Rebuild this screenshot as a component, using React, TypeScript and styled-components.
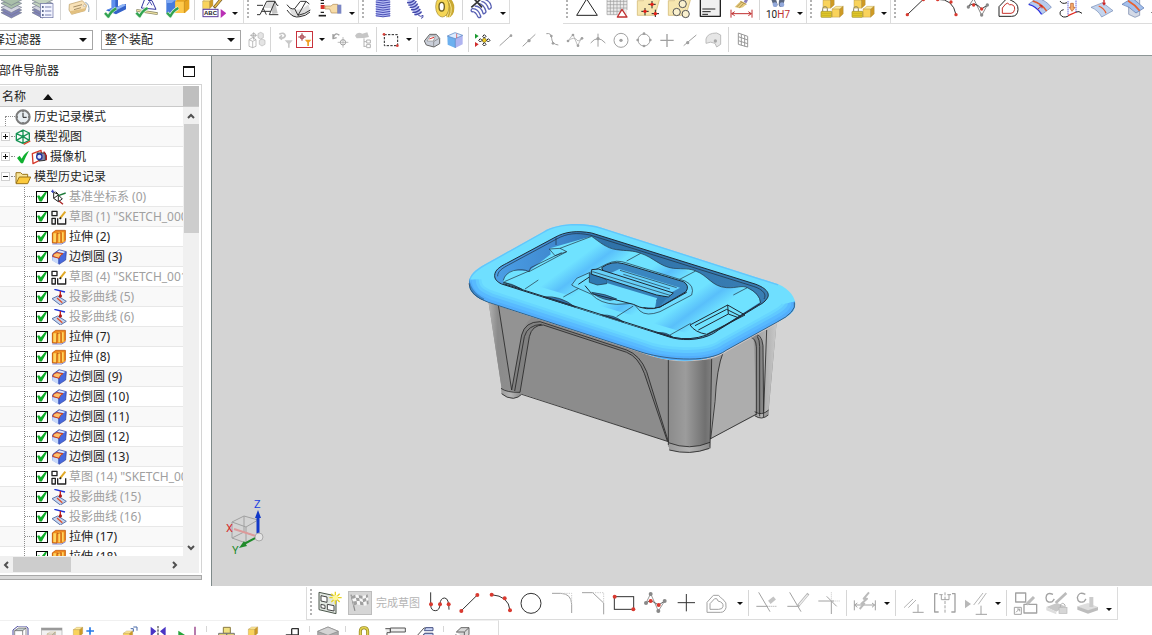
import React from 'react';
import styled, { createGlobalStyle } from 'styled-components';

const GlobalStyle = createGlobalStyle`
  * { box-sizing: border-box; }
  body {
    margin: 0;
    background: #fff;
    color: #1e1e1e;
    font: 12px/20px "Noto Sans", "Noto Sans CJK SC", sans-serif;
    overflow: hidden;
  }
  button, select, input { font: inherit; color: inherit; margin: 0; }
`;

/* ---------- layout ---------- */

const Window = styled.div`
  display: flex;
  flex-direction: column;
  height: 100vh;
  overflow: hidden;
`;

const TopBar = styled.header`
  display: flex;
  flex: none;
  height: 24px;
  overflow: hidden;
`;

const Group = styled.div<{ $gap?: number; $grow?: boolean }>`
  display: flex;
  flex: ${p => (p.$grow ? '1 0 auto' : 'none')};
  margin-left: ${p => p.$gap ?? 0}px;
  padding-right: ${p => (p.$gap === -4 ? 2 : 0)}px;
  border-right: 1px solid #dcdcdc;
  border-bottom: 1px solid #dcdcdc;
`;

const Grip = styled.span<{ $tall?: boolean }>`
  flex: none;
  width: ${p => (p.$tall ? 6 : 8)}px;
  margin: ${p => (p.$tall ? '2px 0' : '0 0 4px')};
  background: linear-gradient(#b2b2b2 2px, transparent 2px) 3px 0 / 2px 4px repeat-y;
`;

const Divider = styled.span<{ $tall?: boolean }>`
  flex: none;
  width: 1px;
  margin: ${p => (p.$tall ? '3px 2px' : '0 2px 3px')};
  background: #d6d6d6;
`;

const ToolButton = styled.button<{ $small?: boolean }>`
  display: flex;
  flex: none;
  justify-content: center;
  align-items: ${p => (p.$small ? 'center' : 'flex-start')};
  width: ${p => (p.$small ? 23 : 31)}px;
  padding: ${p => (p.$small ? 1 : 0)}px 0 0;
  border: 0;
  background: none;
  overflow: hidden;
`;

const FilterActive = styled(ToolButton)`
  width: 17px;
  height: 17px;
  align-self: center;
  align-items: center;
  border: 1px solid #c8323c;
`;

const DropButton = styled.button<{ $top?: number }>`
  display: flex;
  flex: none;
  justify-content: center;
  width: 13px;
  padding: ${p => p.$top ?? 12}px 0 0;
  border: 0;
  background: none;
`;

const Spacer = styled.span<{ $w: number }>`
  flex: none;
  width: ${p => p.$w}px;
`;

const SelectionBar = styled.div`
  display: flex;
  flex: none;
  height: 32px;
  border-bottom: 1px solid #8d9696;
  overflow: hidden;
`;

const Picker = styled.label<{ $w: number; $shift?: number }>`
  display: grid;
  flex: none;
  align-self: center;
  width: ${p => p.$w}px;
  height: 20px;
  margin: 1px 0 0 ${p => p.$shift ?? 8}px;
  border: 1px solid #a5a5a5;
  align-items: center;
  & > * { grid-area: 1 / 1; }
  & > svg { justify-self: end; margin-right: 5px; pointer-events: none; }
`;

const Select = styled.select`
  appearance: none;
  width: 100%;
  height: 18px;
  padding: 0 16px 0 3px;
  border: 0;
  background: #fff;
  line-height: 18px;
`;

const Main = styled.main`
  display: flex;
  flex: 1;
  min-height: 0;
`;

const Sidebar = styled.aside`
  display: flex;
  flex: none;
  flex-direction: column;
  width: 211px;
  padding: 0 9px 6px 0;
`;

const PanelTitle = styled.h2`
  display: flex;
  flex: none;
  justify-content: space-between;
  align-items: center;
  height: 28px;
  margin: 0 0 0 -1px;
  padding: 2px 7px 0 0;
  font-size: 12px;
  font-weight: 400;
`;

const MaxButton = styled.button`
  width: 12px;
  height: 11px;
  padding: 0;
  border: 1px solid #111;
  border-top-width: 2px;
  background: none;
`;

const TreePanel = styled.div`
  display: flex;
  flex: 1;
  flex-direction: column;
  min-height: 0;
  border: solid #d4d4d4;
  border-width: 1px 1px 0 0;
  padding: 1px 2px 0 0;
`;

const TreeHeader = styled.div`
  display: flex;
  flex: none;
  height: 21px;
  padding-left: 2px;
  align-items: stretch;
  background: #efefef;
  border-bottom: 1px solid #c9c9c9;
`;

const SortButton = styled.button`
  display: flex;
  flex: 1;
  align-items: center;
  gap: 17px;
  padding: 1px 0 0;
  border: 0;
  background: none;
`;

const HeaderCorner = styled.span`
  width: 16px;
  background: #bfbfbf;
`;

const TreeBody = styled.div`
  display: flex;
  flex: 1;
  min-height: 0;
`;

const Tree = styled.ul`
  flex: 1;
  min-width: 0;
  margin: 0;
  padding: 0;
  list-style: none;
  overflow: hidden;
`;

const Row = styled.li<{ $dim?: boolean }>`
  display: flex;
  align-items: center;
  height: 20px;
  border-bottom: 1px solid #e8e8e8;
  background: #fff;
  color: ${p => (p.$dim ? '#a0a0a0' : '#1e1e1e')};
  white-space: nowrap;
  &:nth-child(even) { background: #f9f9f9; }
  & > svg { flex: none; }
`;

const Gutter = styled.span<{ $w: number; $child?: boolean }>`
  display: flex;
  flex: none;
  align-items: center;
  align-self: stretch;
  width: ${p => p.$w}px;
  margin-left: ${p => (p.$child ? 24 : 0)}px;
  border-left: ${p => (p.$child ? '1px dotted #8c8c8c' : '0')};
  &::after {
    content: '';
    flex: 1;
    border-top: 1px dotted #8c8c8c;
  }
`;

const Stem = styled.span`
  flex: none;
  align-self: flex-end;
  width: 1px;
  height: 10px;
  margin-left: 5px;
  border-left: 1px dotted #8c8c8c;
`;

const Expander = styled.button`
  flex: none;
  width: 9px;
  height: 9px;
  margin: 0 1px;
  padding: 0;
  border: 1px solid #d0d0d0;
  background: #fff;
  & > svg { display: block; }
`;

const Check = styled.input`
  appearance: none;
  flex: none;
  width: 12px;
  height: 12px;
  margin: 0 3px 0 2px;
  border: 1px solid #000;
  background: #fff;
  &:checked::after {
    content: '';
    display: block;
    width: 10px;
    height: 10px;
    background: #0fae28;
    clip-path: polygon(0 45%, 22% 38%, 38% 58%, 85% 0, 100% 8%, 48% 100%, 26% 100%);
  }
`;

const RowLabel = styled.span`
  margin-left: 3px;
  line-height: 19px;
`;

const FeatureLabel = styled(RowLabel)`
  margin-left: 2px;
`;

const VScroll = styled.div`
  display: flex;
  flex: none;
  flex-direction: column;
  align-items: center;
  justify-content: space-between;
  width: 16px;
  background: #f0f0f0;
`;

const VThumb = styled.span`
  width: 15px;
  height: 109px;
  margin-bottom: auto;
  background: #cdcdcd;
`;

const HScroll = styled.div`
  display: flex;
  flex: none;
  align-items: center;
  height: 17px;
  padding-right: 17px;
  background: #f0f0f0;
`;

const HThumb = styled.span`
  width: 58px;
  height: 15px;
  margin-right: auto;
  background: #cdcdcd;
`;

const ScrollButton = styled.button<{ $wide?: boolean }>`
  display: flex;
  flex: none;
  justify-content: center;
  align-items: center;
  width: ${p => (p.$wide ? 16 : 13)}px;
  height: 17px;
  padding: 0;
  border: 0;
  background: none;
`;

const PanelFoot = styled.div`
  flex: none;
  height: 5px;
  margin-top: 2px;
  border: solid #a8a8a8;
  border-width: 1px 1px 1px 0;
  background: #d8d8d8;
`;

const Viewport = styled.section`
  position: relative;
  flex: 1;
  min-width: 0;
  border-left: 1px solid #7f8a8a;
  background: #d4d4d4;
  overflow: hidden;
`;

const Model = styled.svg`
  position: absolute;
  left: 248px;
  top: 159px;
`;

const Triad = styled.svg`
  position: absolute;
  left: 8px;
  bottom: 28px;
  font: 11px Roboto, "Liberation Sans", sans-serif;
`;

const SketchBar = styled.div`
  display: flex;
  flex: none;
  align-self: flex-start;
  height: 33px;
  margin: 1px 0 0 306px;
  padding-right: 2px;
  border: solid #dcdcdc;
  border-width: 0 1px 1px;
  & > button { align-items: center; }
`;

const FinishText = styled.button`
  width: 46px;
  padding: 0;
  border: 0;
  background: none;
  color: #b4b4b4;
  font-size: 11px;
  text-align: left;
  white-space: nowrap;
`;

const Flagged = styled(ToolButton)`
  width: 24px;
  height: 24px;
  margin: 4px 4px 0 4px;
  border: 1px solid #bdbdbd;
  background: #d6d6d6;
`;

const BottomBar = styled.footer`
  display: flex;
  flex: none;
  align-self: flex-start;
  height: 15px;
  padding: 5px 21px 0 5px;
  border-top: 1px solid #f0f0f0;
  border-right: 1px solid #dcdcdc;
  overflow: hidden;
`;

/* ---------- drawing helpers ---------- */

type PProps = { d: string; s?: string; w?: number; f?: string; dash?: string };
const P = ({ d, s = '#333', w = 3, f = 'none', dash }: PProps) => (
  <path d={d} stroke={s} strokeWidth={w} fill={f} strokeDasharray={dash} strokeLinejoin="round" />
);
const Fill = ({ d, f }: { d: string; f: string }) => <path d={d} fill={f} />;
const Dots = ({ at, f = '#d93a30', r = 5 }: { at: number[][]; f?: string; r?: number }) => (
  <>{at.map(([x, y]) => <circle key={`${x}-${y}`} cx={x} cy={y} r={r} fill={f} />)}</>
);
const Tick = ({ x, y }: { x: number; y: number }) => (
  <g transform={`translate(${x} ${y})`}>
    <P d="M2 16 L12 27 Q20 10 36 2" s="#e6f5e6" w={11} />
    <P d="M2 16 L12 27 Q20 10 36 2" s="#31a350" w={7} />
  </g>
);
const Cube = ({ x, y, k = 1, c = ['#ffeb9c', '#f9d35c', '#cf9a24'] }: { x: number; y: number; k?: number; c?: string[] }) => (
  <g transform={`translate(${x} ${y}) scale(${k})`} stroke="#a98a3c" strokeWidth="1">
    <path d="M0 7 L10 0 L28 0 L19 7Z" fill={c[0]} />
    <path d="M0 7 L19 7 L19 27 L0 27Z" fill={c[1]} />
    <path d="M19 7 L28 0 L28 19 L19 27Z" fill={c[2]} />
  </g>
);
const Lock = ({ x, y, c = '#e3cb2c' }: { x: number; y: number; c?: string }) => (
  <g transform={`translate(${x} ${y})`}>
    <P d="M6 17 V8 Q6 2 13 2 Q20 2 20 8 V17" s="#8b8560" />
    <rect x="1" y="16" width="32" height="18" rx="2" fill={c} stroke="#9a8a28" strokeWidth="2" />
    <P d="M3 22 H31 M3 28 H31" s="#c0a61c" w={2} />
  </g>
);
const Arrow = () => (
  <svg width="6" height="3" viewBox="0 0 6 3" aria-hidden="true"><path d="M0 0 H6 L3 3Z" fill="#111" /></svg>
);
const BigArrow = () => (
  <svg width="8" height="4" viewBox="0 0 8 4" aria-hidden="true"><path d="M0 0 H8 L4 4Z" fill="#111" /></svg>
);

/* ---------- icons ---------- */

const Layers = ({ top }: { top: string }) => (
  <>
    {[38, 30, 22, 10, 0].map((y, i) => (
      <path key={y} d={`M6 ${y} L37 ${y - 12} L68 ${y} L37 ${y + 16}Z`} fill={i < 2 ? '#8183b8' : i === 2 ? '#d3d5e0' : top} stroke="#73788c" strokeWidth="2" />
    ))}
  </>
);

const topIcons: Record<string, React.ReactNode> = {
  layers: <Layers top="#a9bfa9" />,
  layerList: (
    <>
      <Layers top="#c3d3bf" />
      <rect x="31" y="11" width="38" height="42" fill="#f3f5ff" stroke="#646b9e" strokeWidth="2" />
      <P d="M45 21 H64 M45 33 H64 M45 45 H64" s="#7880b0" />
      <P d="M36 21 H41 M36 33 H41 M36 45 H41" s="#31416f" w={5} />
    </>
  ),
  tag: (
    <>
      <P d="M58 7 Q72 12 68 36" s="#8da6bb" />
      <P d="M10 13 L49 2 L62 16 L57 32 L17 43 L9 30Z" f="#f8e2b8" s="#b8985c" w={2} />
      <Fill d="M11 34 L57 25 L57 32 L17 43Z" f="#e2c080" />
      <P d="M22 21 L48 14 M24 29 L45 23" s="#7c623a" w={2} />
      <circle cx="55" cy="17" r="3" fill="#fff" stroke="#777" />
    </>
  ),
  blueBlock: (
    <>
      <Fill d="M29 -6 L48 -6 L48 19 L72 12 L72 28 L42 43 L12 31 L29 24Z" f="#3563c9" />
      <Fill d="M29 -6 L40 -6 L40 28 L12 31 L29 24Z" f="#5d90ee" />
      <Fill d="M40 24 L62 12 L72 16 L46 29Z" f="#8eb5f7" />
      <Tick x={7} y={23} />
    </>
  ),
  sketchCheck: (
    <>
      <P d="M34 0 L25 24 L69 28 L57 2 L45 1" s="#3437a0" />
      <P d="M10 31 L74 41" s="#8c8a68" w={8} />
      <P d="M12 31 L72 41" s="#eee1a0" w={4} />
      <P d="M42 16 L50 4 L57 16" s="#5257b5" />
      <Tick x={8} y={22} />
    </>
  ),
  solidCheck: (
    <>
      <Fill d="M7 -1 H35 V31 L20 40 H7Z" f="#477bdd" />
      <Fill d="M7 -1 H35 L23 9 H7Z" f="#80a9f2" />
      <Fill d="M34 3 L48 -7 H76 V26 L63 39 H34Z" f="#e8a520" />
      <Fill d="M34 5 H61 V39 H34Z" f="#ffc94a" />
      <P d="M61 5 L75 -4 M61 5 V39" s="#b9851c" w={2} />
      <Tick x={7} y={22} />
    </>
  ),
  abc: (
    <>
      <Cube x={8} y={-4} k={1.1} />
      <P d="M42 23 L64 -3" s="#725a2a" w={9} />
      <P d="M44 21 L64 -3" s="#e5b849" w={5} />
      <rect x="9" y="28" width="45" height="22" fill="#fff" stroke="#5b3b9c" strokeWidth="3" />
      <text x="12" y="46" fontSize="18" fontWeight="700" fontFamily="Liberation Sans, sans-serif" fill="#222">ABC</text>
      <Fill d="M62 27 L79 40 L62 54Z" f="#b930b5" />
    </>
  ),
  bridge: (
    <>
      <Fill d="M27 24 L40 1 L62 1 L49 24Z" f="#dedede" />
      <Fill d="M49 24 L60 4 L68 40 L52 42Z" f="#c4c4c4" />
      <P d="M6 16 H24 M6 44 H15 L35 4 H60 L43 44 H70 M60 4 L66 16 H70 M24 24 L34 44 M20 34 H47" />
    </>
  ),
  saddle: (
    <>
      <Fill d="M8 20 Q35 42 67 13 L73 32 Q45 56 20 50Z" f="#dedede" />
      <P d="M3 14 Q14 30 26 26 L43 4 H60 L70 12 M26 26 L36 46 L60 4 M36 46 Q58 42 73 30 M3 30 Q20 56 42 50 Q60 48 72 36" />
    </>
  ),
  pick: (
    <>
      <P d="M11 1 H21 M11 10 H21 M11 37 H21" s="#222" w={4} />
      <P d="M5 47 H27" s="#222" w={5} />
      <rect x="11" y="15" width="12" height="12" fill="#d8352c" />
      <P d="M24 18 H42 L48 13 H62 V39 H43 L38 27 H24Z" f="#f7dca8" s="#b08a52" w={2} />
      <rect x="61" y="14" width="12" height="27" fill="#7b86c4" />
    </>
  ),
  coil: (
    <>
      <rect x="18" y="-4" width="42" height="54" fill="#b6bdf5" />
      <P d="M17 -1 Q39 6 61 -1 M17 6 Q39 13 61 6 M17 13 Q39 20 61 13 M17 20 Q39 27 61 20 M17 27 Q39 34 61 27 M17 34 Q39 41 61 34 M17 41 Q39 48 61 41 M17 47 Q39 54 61 47" s="#4a4fb4" />
    </>
  ),
  spring: (
    <>
      <Fill d="M18 2 L38 -6 L62 40 L44 48Z" f="#bcc3f5" />
      <P d="M18 8 Q34 10 42 -3 M22 15 Q38 17 46 3 M26 22 Q42 24 50 11 M30 29 Q46 31 54 19 M34 37 Q50 38 58 27 M40 44 Q54 45 62 35" s="#4348a8" w={4} />
      <P d="M52 46 Q60 52 66 46 Q68 54 60 55" s="#4348a8" />
    </>
  ),
  roll: (
    <>
      <ellipse cx="50" cy="24" rx="17" ry="28" fill="#c9a832" />
      <P d="M38 -3 Q58 23 44 53 M47 -2 Q66 23 52 52" s="#f5e48c" />
      <ellipse cx="31" cy="20" rx="20" ry="31" fill="#f5d655" stroke="#a08a33" strokeWidth="2" />
      <ellipse cx="29" cy="20" rx="8" ry="13" fill="#fff" stroke="#706222" strokeWidth="4" />
    </>
  ),
  springX: (
    <>
      <P d="M12 26 Q30 24 38 48 M10 34 Q24 34 30 52 M20 18 Q40 18 46 42 M30 10 Q48 12 54 34 M40 4 Q56 6 62 28 M50 -2 Q66 2 70 20 M12 26 Q6 34 14 36 M30 52 Q40 54 38 48 M46 42 Q54 40 54 34 M62 28 Q70 26 70 20" s="#5a62b4" w={4} />
      <P d="M14 -8 L42 22 M42 -6 L10 22" s="#333" w={5} />
    </>
  ),
  triangle: <P d="M8 46 L38 -3 L70 46Z" s="#222" />,
  gridTri: (
    <>
      <rect x="6" y="-6" width="60" height="50" fill="#ececec" />
      <P d="M6 -6 V44 M16 -6 V44 M26 -6 V44 M36 -6 V44 M46 -6 V44 M56 -6 V30 M66 -6 V30 M6 4 H66 M6 14 H66 M6 24 H66 M6 34 H44 M6 44 H38" s="#9a9a9a" w={2} />
      <P d="M37 51 L51 28 L66 51Z" f="#fff" s="#c03030" w={4} />
    </>
  ),
  pts: (
    <>
      <P d="M4 46 V2 H22 L27 -3 L71 -3 L57 46Z" f="#f6e6b0" s="#cfb266" w={2} />
      <P d="M48 3 V25 M37 13 H59 M27 24 V46 M16 34 H38 M58 29 V51 M47 41 H69" s="#222" />
      <Dots at={[[48, 13], [27, 34], [58, 41]]} f="#e82018" />
    </>
  ),
  holes: (
    <>
      <P d="M4 46 V2 H22 L27 -3 L71 -3 L57 46Z" f="#f6e6b0" s="#cfb266" w={2} />
      {[[47, 12], [29, 36], [56, 42]].map(([x, y]) => <circle key={x} cx={x} cy={y} r="11" fill="#faf1cf" stroke="#555" strokeWidth="3" />)}
    </>
  ),
  note: (
    <>
      <P d="M7 -6 V49 H67 V-6" f="#f0f0f0" s="#222" w={4} />
      <P d="M13 27 H52 M13 35 H38 M13 43 H30" s="#222" />
    </>
  ),
  brush: (
    <>
      <P d="M48 8 L56 -8" s="#8b7fbb" w={9} />
      <Fill d="M17 21 L36 2 L53 12 L42 22 L31 25Z" f="#e5ca7c" />
      <P d="M34 4 L52 13 M23 21 L38 6 M31 24 L44 10" s="#9a7b3e" w={2} />
      <P d="M6 29 V53 M69 29 V53 M8 41 H67 M17 35 L8 41 L17 47 M58 35 L67 41 L58 47" s="#c03030" />
    </>
  ),
  h7: (
    <>
      <path d="M18 -4 L34 1 L38 15 Q34 24 26 18Z M42 1 L60 -4 L54 18 Q44 26 41 14Z" fill="#59667f" />
      <Dots at={[[30, 14], [51, 14]]} f="#93a9dc" r={7} />
      <text x="3" y="54" fontSize="30" fontFamily="Roboto, sans-serif" fill="#222">10<tspan fill="#c03030">H7</tspan></text>
    </>
  ),
  lockCubes: (
    <>
      <Cube x={15} y={-8} k={1.2} /><Cube x={42} y={19} k={1.2} /><Lock x={8} y={18} />
    </>
  ),
  line: <><P d="M16 44 L64 -2" /><Dots at={[[16, 44], [64, -1]]} /></>,
  arc: <><P d="M13 -2 Q60 -4 69 44" /><Dots at={[[14, -1], [54, 6], [69, 44]]} /></>,
  spline: (
    <>
      <P d="M12 21 L29 -4 L53 46 L70 15" s="#888" /><P d="M12 21 Q30 0 53 27 L70 15" />
      <Dots at={[[13, 21], [53, 45], [70, 15]]} f="#888" /><Dots at={[[29, 15], [53, 27]]} />
    </>
  ),
  offset: (
    <>
      <P d="M12 49 V20 L34 -3 Q44 -3 50 2 Q70 10 69 29 Q68 49 50 49Z" s="#222" />
      <P d="M22 40 V24 L32 12 Q39 6 43 14 Q60 12 59 28 Q57 40 48 40Z" s="#c8322c" />
    </>
  ),
  surfCurve: (
    <>
      <Fill d="M8 12 L34 -6 Q62 2 76 22 L48 43 Q32 18 8 12Z" f="#b7cbee" />
      <P d="M8 12 L34 -6 Q62 2 76 22 L48 43" s="#667fb3" w={2} />
      <P d="M8 13 Q32 19 47 43" s="#2a2ee0" w={4} />
      <P d="M20 3 Q46 10 62 33" s="#e0582a" w={4} />
      <P d="M35 28 L48 17 M40 17 H48 V25" s="#c22" />
    </>
  ),
  project: (
    <>
      <P d="M9 3 Q15 14 30 8 M20 29 Q6 32 10 44 Q18 56 34 48" s="#222" />
      <P d="M33 47 L58 36" s="#e02820" w={4} /><P d="M57 36 Q66 32 75 40" s="#222" />
      <P d="M33 4 V46 M57 -2 V36" s="#2222cc" dash="3 3" />
      <P d="M41 10 H49 V22 H54 L45 34 L37 22 H41Z" f="#f6b070" s="#b4501c" w={2} />
    </>
  ),
  surfPin: (
    <>
      <P d="M9 22 L44 8 L75 32 L41 51 Q30 30 9 22Z" f="#c3d4ee" s="#7289b4" w={2} />
      <P d="M32 18 Q48 24 54 40" s="#e86030" w={4} /><P d="M48 -4 V10" s="#c22" w={4} /><Fill d="M42 8 H54 L48 17Z" f="#c22" />
    </>
  ),
  surfCross: (
    <>
      <P d="M29 12 L52 -6 L62 0 V46 L48 52 L29 43Z" f="#d3d9e6" s="#6d7fa4" w={2} />
      <P d="M9 13 L40 -6 L75 24 L51 39 Q30 18 9 13Z" f="#a4c0ec" s="#5573aa" w={2} />
      <P d="M27 2 Q48 14 62 32" s="#e86030" w={5} />
    </>
  ),
};

const TopIcon = ({ n, label }: { n: string; label: string }) => (
  <ToolButton type="button" aria-label={label}>
    <svg width="26" height="20" viewBox="0 0 78 60" aria-hidden="true">{topIcons[n]}</svg>
  </ToolButton>
);

const g = '#a0a0a0';
const smallIcons: Record<string, React.ReactNode> = {
  assembly: <><P d="M3 26 L14 20 L24 26 V46 L14 50 L3 46Z M3 26 L14 31 L24 26 M14 31 V50" s={g} w={2} /><P d="M17 4 V26 M6 13 H28" s={g} w={2} /><circle cx="17" cy="13" r="6" fill="none" stroke={g} strokeWidth="2" /><path d="M30 8 L38 4 L46 8 V20 L38 24 L30 20Z M34 28 L42 24 L51 28 V40 L42 45 L34 40Z" fill="#e4e4e4" stroke="#b8b8b8" strokeWidth="2" /></>,
  undoFilter: <><P d="M10 10 Q24 2 28 14 Q24 24 11 20 L18 13 M11 20 L18 26" s="#c4c4c4" w={5} /><Fill d="M26 28 H50 L41 38 V50 H36 V38Z" f="#c9c9c9" /></>,
  rotateCross: <><P d="M6 9 V23 L17 20 M7 20 Q12 2 25 13" s={g} w={4} /><P d="M36 18 V50 M20 34 H52" s={g} w={2} /><circle cx="36" cy="34" r="8" fill="none" stroke={g} strokeWidth="3" /></>,
  treeGray: <><Fill d="M3 14 Q10 0 25 8 L40 4 L45 18 L30 21 L8 22Z" f="#c6c6c6" /><P d="M30 22 V48 M30 32 H36 M30 46 H36 M38 27 H49 V36 H38Z M38 40 H49 V50 H38Z" s="#b4b4b4" /></>,
  marquee: <><P d="M7 11 H47 V44 H7Z" s="#222" dash="7 4" /><Dots at={[[6, 10], [46, 44]]} f="#d84038" r={4} /></>,
  gauge: <><P d="M4 30 L20 10 H40 L50 22 V38 L33 48 L10 42Z" f="#c9ced8" s="#666" /><P d="M12 30 L22 15 H37 L31 30Z" f="#fff" s="#888" w={2} /><P d="M32 48 V32 L48 22" s="#777" w={2} /><P d="M19 24 L33 19" s="#d33" /></>,
  cube3: <><Fill d="M4 15 L27 5 L50 13 L28 23Z" f="#dcecff" /><Fill d="M4 15 L28 23 V51 L5 41Z" f="#6cb0ef" /><Fill d="M28 23 L50 13 V40 L28 51Z" f="#b0b4f0" /><P d="M4 15 L27 5 L50 13 L28 23Z M28 23 V51" s="#4a78bd" w={2} /><P d="M32 21 V8" s="#d33" w={2} /></>,
  snapAll: <><Fill d="M3 8 L14 15 L3 23Z" f="#1a9a30" /><Fill d="M3 33 L14 40 L3 48Z" f="#d02c2c" /><circle cx="31" cy="28" r="6" fill="#f5d020" stroke="#776410" strokeWidth="2" /><P d="M26 16 L31 11 L36 16 L31 21Z M26 40 L31 35 L36 40 L31 45Z M14 28 L19 23 L24 28 L19 33Z M38 28 L43 23 L48 28 L43 33Z" s="#222" /></>,
  l1: <><P d="M8 44 L42 13" s={g} /><Dots at={[[42, 14]]} f={g} r={4} /></>,
  l2: <><P d="M8 46 L46 10" s={g} /><Dots at={[[27, 29]]} f={g} /></>,
  sCurve: <><P d="M10 8 Q26 5 26 22 Q27 40 46 42" s={g} /><Dots at={[[25, 15], [30, 37]]} f={g} r={4} /></>,
  poly: <><P d="M6 30 L21 10 L35 44 L47 20 M6 30 Q24 14 36 30 L48 24" s={g} w={2} /><Dots at={[[6, 30], [21, 12], [36, 44], [48, 22]]} f={g} r={4} /></>,
  cross2: <><P d="M5 36 Q26 10 49 36 M27 8 V47" s={g} /><Dots at={[[27, 23]]} f={g} /></>,
  circDot: <><circle cx="27" cy="28" r="21" fill="none" stroke={g} strokeWidth="3" /><Dots at={[[27, 28]]} f={g} /></>,
  circ4: <><circle cx="27" cy="27" r="18" fill="none" stroke={g} strokeWidth="3" /><Dots at={[[27, 8], [27, 45], [8, 27], [46, 27]]} f={g} r={4} /></>,
  plus: <P d="M27 9 V48 M7 28 H47" s={g} w={4} />,
  l3: <><P d="M8 44 L46 12" s={g} /><Dots at={[[20, 35]]} f={g} /></>,
  face: <><P d="M6 24 Q10 6 38 6 L50 12 V40 L38 48 L33 37 Q20 30 6 37Z" f="#e6e6e6" s="#bcbcbc" /><circle cx="34" cy="30" r="5" fill="#a8a8a8" /></>,
  grid: <P d="M13 6 L41 16 V48 L13 40Z M22 9 V43 M32 12 V46 M13 17 L41 27 M13 29 L41 38" s="#999" />,
  activeFilter: <><P d="M18 4 V32 M4 18 H32" s="#a03038" /><circle cx="18" cy="18" r="7" fill="none" stroke="#a03038" strokeWidth="3" /><Fill d="M28 28 H52 L43 38 V50 H37 V38Z" f="#f0a020" /></>,
};

const SmallIcon = ({ n, label }: { n: string; label: string }) => (
  <ToolButton type="button" aria-label={label} $small>
    <svg width="18" height="18" viewBox="0 0 54 54" aria-hidden="true">{smallIcons[n]}</svg>
  </ToolButton>
);

const k = '#a2a2a2';
const sketchIcons: Record<string, React.ReactNode> = {
  newSketch: <><P d="M9 4 L60 15 V68 L9 56Z" f="#e2e8e2" s="#4a554a" /><P d="M15 14 L33 18 V34 L15 30Z M15 40 L27 43 V53 L15 50Z M34 40 L54 44 V60 L34 56Z" f="#fff" s="#444" /><P d="M58 2 V40 M40 20 H77 M46 8 L71 33 M71 8 L46 33" s="#e8d424" w={4} /><Dots at={[[58, 20]]} f="#fff79a" r={8} /></>,
  profile: <><P d="M17 4 V42 Q18 60 32 59 Q44 58 45 40 Q46 21 59 21 Q72 22 72 56" /><Dots at={[[18, 40], [45, 40], [71, 40]]} r={6} /></>,
  line: <><P d="M16 59 L64 12" /><Dots at={[[16, 60], [64, 12]]} r={6} /></>,
  arc: <><P d="M13 11 Q65 15 69 58" /><Dots at={[[14, 11], [53, 22], [69, 58]]} r={6} /></>,
  circle: <circle cx="39" cy="37" r="30" fill="none" stroke="#333" strokeWidth="3" />,
  fillet: <><P d="M9 7 H35 Q67 8 68 40 V66" s={k} /><P d="M38 7 H68 V36" s="#ccc" dash="4 3" /></>,
  chamfer: <><P d="M6 5 H38 L71 36 V70" s={k} /><P d="M38 5 H71 V36" s="#ccc" dash="4 3" /></>,
  rect: <><rect x="10" y="17" width="58" height="38" fill="none" stroke="#333" strokeWidth="3" /><Dots at={[[11, 17], [67, 55]]} r={6} /></>,
  spline: <><P d="M12 36 L26 8 L49 60 L68 30" s="#999" /><P d="M12 36 L26 28 L50 42 L68 30" s="#666" /><Dots at={[[12, 36], [26, 9], [49, 60], [68, 30]]} f="#888" r={6} /><Dots at={[[26, 30], [50, 42]]} r={6} /></>,
  plus: <P d="M40 9 V61 M14 35 H66" s="#333" />,
  offset: <><P d="M9 64 V34 L28 13 H44 Q48 20 56 24 Q70 34 66 50 Q62 64 50 64Z M18 55 V38 L32 23 Q40 20 42 30 Q59 34 57 46 Q56 55 44 55Z" s={k} /></>,
  trim: <><P d="M7 46 H43 M14 4 L48 62" s={k} /><P d="M46 46 H70" s={k} dash="3 3" /><P d="M46 34 L62 21" s="#c4c4c4" w={12} /></>,
  extend: <><P d="M7 46 H43 M14 4 L48 62" s={k} /><P d="M38 46 L70 8" s="#b4b4b4" w={8} /><P d="M42 42 L68 11" s="#eee" w={4} /></>,
  corner: <><P d="M7 30 H54 M46 30 V69 M32 16 L62 46" s={k} /><P d="M46 4 V30 H71" s="#c4c4c4" dash="3 3" /></>,
  dimension: <><P d="M7 28 V58 M70 28 V58 M8 42 H68 M16 36 L8 42 L16 49 M60 36 L68 42 L60 49" s={k} /><P d="M51 4 L35 23 H45 L28 38 H37 L23 54" s="#bbb" w={6} /></>,
  parallel: <><P d="M9 50 L36 24 M22 50 L45 27" s="#b5b5b5" /><P d="M51 40 V64 M35 64 H68" s={k} /></>,
  mirror: <><P d="M17 8 H8 V63 H20 M60 8 H69 V63 H58" s={k} w={4} /><P d="M39 4 V69" s={k} dash="9 4" /><P d="M28 12 V26 H51 V12 M22 11 H32 M46 11 H57" s={k} /></>,
  autoCon: <><Fill d="M6 26 L24 39 L6 52Z" f="#b8b8b8" /><P d="M32 42 L60 6 M46 40 L70 6" s="#b5b5b5" /><P d="M54 44 V70 M38 70 H72" s={k} /></>,
  attach: <><P d="M11 6 H41 V33 H11Z M36 40 H74 V66 H36Z" s={k} w={4} /><P d="M7 49 H28 V70 H7Z M12 64 L22 54 M15 54 H23 V61" s={k} /><P d="M44 40 L66 18" s="#bcbcbc" w={9} /></>,
  edit: <><P d="M30 10 Q10 2 9 20 Q10 38 28 32 L34 24" s={k} w={4} /><P d="M38 36 L70 6" s="#bbb" w={8} /><Fill d="M10 48 L42 36 L66 46 L40 62Z" f="#c8c8c8" /><Fill d="M10 48 L40 62 V70 L10 58Z" f="#dedede" /><P d="M52 50 V42 Q59 32 66 42 V50" s="#b0b0b0" /><rect x="48" y="49" width="24" height="18" fill="#d6d6d6" stroke="#b8b8b8" strokeWidth="2" /></>,
  sphere: <><P d="M34 10 Q14 0 10 20 Q12 38 30 32 L36 24" s={k} w={4} /><Fill d="M10 46 L42 36 L72 48 L42 60Z" f="#dedede" /><Fill d="M46 18 H58 V48 H46Z" f="#cbcbcb" /><Fill d="M10 46 L42 58 V68 L10 56Z M72 48 L42 58 V68 L72 58Z" f="#bdbdbd" /></>,
  flag: <><P d="M7 6 L21 64" s="#8a8a8a" w={4} /><Fill d="M9 12 Q28 2 38 10 Q52 14 66 4 L70 40 Q52 50 40 43 Q28 38 17 46Z" f="#f8f8f8" /><Fill d="M9 12 L22 7 L24 17 L12 22Z M34 8 L48 11 L48 22 L36 18Z M24 17 L36 18 L38 29 L27 29Z M48 22 L60 18 L62 29 L50 33Z M14 31 L27 29 L29 40 L17 46Z M38 29 L50 33 L52 45 L40 43Z M60 8 L66 4 L68 16 L60 18Z M62 29 L69 26 L70 40 L63 42Z" f="#a0a0a0" /></>,
};

const SketchIcon = ({ n, label }: { n: string; label: string }) => (
  <ToolButton type="button" aria-label={label}>
    <svg width="26" height="24" viewBox="0 0 78 72" aria-hidden="true">{sketchIcons[n]}</svg>
  </ToolButton>
);

const footIcons: Record<string, React.ReactNode> = {
  cage: <><P d="M15 12 L30 0 H52 L60 6 V33 H15Z" s="#4b4b9c" /><P d="M20 14 L32 6 H54 L44 14Z M20 14 V33 M44 14 V33 M54 6 V33" s="#555" f="#c4d0d0" w={2} /></>,
  win: <><rect x="7" y="6" width="62" height="36" fill="#f2f2f2" stroke="#aaa" strokeWidth="2" /><rect x="7" y="6" width="62" height="7" fill="#999" /><Cube x={24} y={18} k={0.9} c={['#eee', '#ddd', '#bbb']} /></>,
  addBody: <><Cube x={10} y={4} k={1} /><P d="M60 4 V26 M49 15 H72" s="#2478e8" w={5} /></>,
  moveBody: <><Cube x={28} y={15} k={1} /><P d="M50 8 H58 V17 M58 3 H69 V14" s="#4668a8" /></>,
  mirrorBody: <><Fill d="M17 2 L34 16 L17 31Z M62 2 L45 16 L62 31Z" f="#4a35c4" /><P d="M39 0 V33" s="#222" dash="7 3" /></>,
  axis: <><Fill d="M7 14 L27 27 V33 H7Z" f="#26a43a" /><P d="M57 2 V30 M40 30 H73" s="#923a84" w={4} /></>,
  boxes: <><P d="M34 4 H55 V22 H34Z" f="#f0e080" s="#8a7a40" /><P d="M20 22 H44 V36 H20Z M44 22 H67 V36 H44Z" f="#e0d078" s="#777" /></>,
  block: <Cube x={16} y={3} k={1} />,
  steps: <P d="M38 8 H58 V27 H38 V8 M38 27 H22 V36 M50 27 V36" s="#333" w={4} />,
  slab: <><P d="M8 16 L39 3 L70 16 V36 L39 30 L8 36Z" f="#aaa" s="#888" w={2} /><P d="M8 16 L39 3 L70 16 L39 28Z" f="#d4d4d4" s="#888" w={2} /></>,
  ring: <><P d="M28 36 V16 Q28 5 39 5 Q50 5 50 16 V36" s="#8f8018" w={9} /><P d="M28 36 V16 Q28 5 39 5 Q50 5 50 16 V36" s="#e0d050" w={5} /></>,
  plate: <P d="M10 8 H25 V20 H15 V36 M25 6 H70 V18 H25Z" s="#555" f="#eee" />,
  link: <><P d="M8 34 L33 6 H60 M22 34 L36 22 H58" s="#555" /><P d="M38 5 H60 V14 H34Z M34 22 H60 V34 H30Z" s="#4c578a" f="#c8d4f4" /></>,
  prism: <P d="M22 18 L36 5 H60 V26 L48 36 M22 18 H46 V36 M46 18 L60 5 M6 34 L22 26" s="#666" f="#d8d8d8" />,
};
const FootIcon = ({ n, label }: { n: string; label: string }) => (
  <ToolButton type="button" aria-label={label}>
    <svg width="26" height="11" viewBox="0 0 78 33" aria-hidden="true">{footIcons[n]}</svg>
  </ToolButton>
);

const Drop = ({ top }: { top?: number }) => (
  <DropButton type="button" aria-label="更多" $top={top}><Arrow /></DropButton>
);

/* ---------- tree ---------- */

const treeIcons: Record<string, React.ReactNode> = {
  clock: <><circle cx="24" cy="24" r="20" fill="#e8eef2" stroke="#7b7b7b" strokeWidth="6" /><P d="M24 11 V25 H35" s="#222" /><P d="M24 6 V9 M24 39 V42 M6 24 H9 M39 24 H42" s="#444" /></>,
  view: <><P d="M4 14 L24 3 L43 12 V34 L24 43 L4 34Z M4 14 L24 23 L43 12 M24 3 V43 M4 34 L24 23 L43 34" s="#179455" w={4} /><P d="M26 46 L46 36" s="#e2462a" w={4} /></>,
  camera: <><P d="M4 14 L30 4 L34 30 L6 44Z" f="#fff" s="#d6382a" w={4} /><P d="M18 12 H43 V34 L24 36Z" f="#8386a8" s="#333" /><circle cx="25" cy="23" r="8" fill="#dfe6ff" stroke="#2433a0" strokeWidth="4" /><P d="M38 8 L46 20 V34" s="#b02020" w={4} /></>,
  folder: <><P d="M3 42 V11 H17 L22 16 H38 V24" f="#f7e49a" s="#9b7418" /><P d="M3 44 L13 24 H47 L38 44Z" f="#fbc93c" s="#9b7418" /></>,
  csys: <><P d="M5 2 V12 M0 7 H10" s="#3440c0" /><P d="M8 10 V28 L22 38 V16Z M8 28 L22 18 L34 30 M22 38 L34 30 M14 8 L22 16" s="#222" /><P d="M22 20 L44 12" s="#1c7a38" w={4} /><P d="M24 36 L36 46" s="#a22" w={4} /></>,
  sketch: <><P d="M3 7 H18 V20 H3Z M3 28 H13 V45 H3Z M20 28 V45 H44 V28" s="#222" w={4} /><P d="M27 28 L43 8" s="#e0a827" w={6} /><P d="M26 30 L30 26" s="#222" w={5} /></>,
  extrude: <><Fill d="M3 11 L14 4 H44 V36 L34 43 H3Z" f="#f08a1e" /><Fill d="M7 13 H16 V40 H7Z M22 10 H28 V40 H22Z M33 10 H38 V38 H33Z" f="#ffd660" /><P d="M4 12 V41 L17 43 L18 14 L30 11 M30 12 V41 M4 12 L14 4 H43 V34" s="#b8500e" w={2} /><P d="M4 45 H32 L44 38" s="#4553bb" w={2} /></>,
  blend: <><Fill d="M3 18 L24 2 L46 8 L44 33 L24 46 L4 34Z" f="#4769dd" /><Fill d="M4 24 L22 28 V46 L4 35Z" f="#c8d9fa" /><P d="M5 22 Q8 11 18 11 L36 14 Q27 17 24 28Z" f="#ffc06a" s="#d0401c" /><Fill d="M18 8 L26 3 L44 8 L37 12Z" f="#e3ecff" /><P d="M24 28 V46 L44 33 L46 8 L24 2 L5 16" s="#2b3e9c" w={2} /></>,
  projCurve: <><P d="M10 1 L42 9" s="#2035d6" w={4} /><P d="M28 6 V22" s="#c82424" w={4} /><P d="M3 29 L20 21 L46 37 L28 48Z" f="#c5d4ef" s="#5d76ab" w={3} /><P d="M18 27 L34 41" s="#e05028" w={4} /><Dots at={[[28, 21]]} f="#b01818" /></>,
};
const TreeIcon = ({ n }: { n: string }) => (
  <svg width="16" height="16" viewBox="0 0 48 48" aria-hidden="true">{treeIcons[n]}</svg>
);

const features: { icon: string; text: string; dim?: boolean }[] = [
  { icon: 'csys', text: '基准坐标系 (0)', dim: true },
  { icon: 'sketch', text: '草图 (1) "SKETCH_000:草图"', dim: true },
  { icon: 'extrude', text: '拉伸 (2)' },
  { icon: 'blend', text: '边倒圆 (3)' },
  { icon: 'sketch', text: '草图 (4) "SKETCH_001:草图"', dim: true },
  { icon: 'projCurve', text: '投影曲线 (5)', dim: true },
  { icon: 'projCurve', text: '投影曲线 (6)', dim: true },
  { icon: 'extrude', text: '拉伸 (7)' },
  { icon: 'extrude', text: '拉伸 (8)' },
  { icon: 'blend', text: '边倒圆 (9)' },
  { icon: 'blend', text: '边倒圆 (10)' },
  { icon: 'blend', text: '边倒圆 (11)' },
  { icon: 'blend', text: '边倒圆 (12)' },
  { icon: 'blend', text: '边倒圆 (13)' },
  { icon: 'sketch', text: '草图 (14) "SKETCH_002:草图"', dim: true },
  { icon: 'projCurve', text: '投影曲线 (15)', dim: true },
  { icon: 'projCurve', text: '投影曲线 (16)', dim: true },
  { icon: 'extrude', text: '拉伸 (17)' },
  { icon: 'extrude', text: '拉伸 (18)' },
];

const Toggle = ({ open, label }: { open?: boolean; label: string }) => (
  <Expander type="button" aria-label={label} aria-expanded={!!open}>
    <svg width="7" height="7" viewBox="0 0 7 7" aria-hidden="true">
      <path d={open ? 'M1 3.5 H6' : 'M1 3.5 H6 M3.5 1 V6'} stroke="#111" />
    </svg>
  </Expander>
);

const Chevron = ({ d }: { d: string }) => (
  <svg width="8" height="8" viewBox="0 0 8 8" aria-hidden="true"><path d={d} fill="none" stroke="#505050" strokeWidth="2" /></svg>
);

/* ---------- 3D model ---------- */

const valleyShape = 'M-70 100 L120 -40 L200 0 L30 130Z';

const StorageBox = () => (
  <Model width="345" height="245" viewBox="0 0 1035 735" role="img" aria-label="收纳箱模型">
    <defs>
      <linearGradient id="cornerL" x1="0" x2="1"><stop offset="0" stopColor="#b4b4b4" /><stop offset=".4" stopColor="#8b8b8b" /><stop offset="1" stopColor="#8e8e8e" /></linearGradient>
      <linearGradient id="cornerM" x1="0" x2="1"><stop offset="0" stopColor="#8b8b8b" /><stop offset=".4" stopColor="#9c9c9c" /><stop offset=".85" stopColor="#707070" /><stop offset="1" stopColor="#808080" /></linearGradient>
      <linearGradient id="cornerR" x1="0" x2="1"><stop offset="0" stopColor="#999" /><stop offset=".5" stopColor="#b0b0b0" /><stop offset="1" stopColor="#c8c8c8" /></linearGradient>
      <linearGradient id="foot" x1="0" x2="1"><stop offset="0" stopColor="#9a9a9a" /><stop offset=".5" stopColor="#b4b4b4" /><stop offset="1" stopColor="#8a8a8a" /></linearGradient>
      <linearGradient id="valley" gradientUnits="userSpaceOnUse" x1="23" y1="31" x2="72" y2="98"><stop offset="0" stopColor="#4aa8f8" stopOpacity="0" /><stop offset=".5" stopColor="#4aa8f8" stopOpacity=".6" /><stop offset="1" stopColor="#4aa8f8" stopOpacity="0" /></linearGradient>
      <linearGradient id="wall" x1="0" x2="1"><stop offset="0" stopColor="#4b9fe6" /><stop offset=".25" stopColor="#3e86cc" /><stop offset=".4" stopColor="#2f72a8" /><stop offset="1" stopColor="#397eb4" /></linearGradient>
      <clipPath id="lidClip"><path d="M27 205 C27 180 45 165 75 148 L250 50 C290 25 370 20 425 38 L955 208 C1000 228 1012 262 1003 280 C997 296 975 310 950 322 L800 405 C765 430 710 440 640 435 C605 432 570 420 540 410 L85 262 C45 248 27 230 27 205Z" /></clipPath>
      <clipPath id="panelClip"><path d="M130 196 Q135 175 160 166 L207 168 L272 118 L270 100 L395 64 C420 82 440 100 470 104 C500 108 520 106 542 115 C580 127 600 155 640 160 C670 162 690 160 707 168 C745 182 755 215 800 218 C830 220 845 210 862 218 C885 230 900 245 900 262 L775 343 C740 370 690 375 640 367 L475 318 L130 206Z" /></clipPath>
    </defs>

    <Fill d="M85 258 L125 520 L125 535 Q140 550 160 550 Q176 548 185 536 L625 680 L628 705 Q690 722 748 700 L750 672 L885 600 Q905 616 925 598 L950 320 L640 400Z" f="#8c8c8c" />
    <Fill d="M85 258 L115 268 L155 525 L125 522Z" f="url(#cornerL)" />
    <Fill d="M115 268 L220 302 Q190 330 182 365 L155 525Z" f="#939393" />
    <Fill d="M155 525 L185 360 Q193 322 235 320 L500 405 Q540 420 560 470 L625 680 L610 640 L552 475 Q532 425 500 412 L250 330 Q215 330 208 365 L180 532Z" f="#808080" />
    <Fill d="M625 435 H755 L750 695 Q690 712 625 695Z" f="url(#cornerM)" />
    <Fill d="M755 430 L880 362 Q885 370 888 390 L890 600 L750 672Z" f="#adadad" />
    <Fill d="M755 430 L790 410 Q775 450 765 540 L750 672Z" f="#969696" />
    <Fill d="M880 355 L950 322 L925 590 Q905 600 890 595Z" f="url(#cornerR)" />
    <Fill d="M878 362 Q900 355 909 390 L911 600 L889 604 L888 400Z" f="#858585" />
    <Fill d="M123 518 Q140 532 160 530 L182 534 Q175 550 158 550 Q135 548 125 537Z" f="url(#foot)" />
    <Fill d="M625 683 Q690 708 750 682 L748 702 Q690 722 628 706Z" f="url(#foot)" />
    <Fill d="M884 590 Q905 604 926 585 L925 600 Q905 617 886 604Z" f="url(#foot)" />
    <g fill="none" stroke="#262626" strokeWidth="2.5">
      <path d="M115 270 L155 525 L185 360 Q195 320 240 320 L500 405 Q540 420 560 470 L625 680" />
      <path d="M164 528 L193 365 Q203 330 245 328 M180 532 L208 365 Q216 330 250 330 L500 412 Q535 426 553 475 L622 678" />
      <path d="M123 520 Q140 533 180 532 M125 536 Q140 550 160 550 Q176 548 185 538 L625 680" />
      <path d="M625 435 V690 M628 705 Q690 722 748 700 M625 683 Q690 708 750 682 M755 432 L750 700 M750 672 L888 598" />
      <path d="M790 410 Q770 460 765 560 L752 672 M878 360 Q905 352 909 392 L911 606 M870 366 Q888 370 889 395 V600 M892 364 Q899 375 899 395 V604 M920 345 L911 590" />
      <path d="M884 590 Q905 604 926 585 M884 602 Q905 617 925 600" />
    </g>
    <path d="M88 260 L540 408 Q600 430 650 434 Q760 438 800 405 L950 322" fill="none" stroke="#cfc8c8" strokeWidth="8" />

    <g clipPath="url(#lidClip)">
      <rect x="20" y="20" width="1000" height="430" fill="#6fdfff" />
      <g fill="none" strokeLinejoin="round">
        <path d="M27 195 C30 240 60 250 85 262 L540 410 C600 435 740 450 800 405 L950 322 Q1010 290 1003 260" stroke="#67d6ff" strokeWidth="74" />
        <path d="M27 195 C30 240 60 250 85 262 L540 410 C600 435 740 450 800 405 L950 322 Q1010 290 1003 260" stroke="#60c9ff" strokeWidth="58" />
        <path d="M27 195 C30 240 60 250 85 262 L540 410 C600 435 740 450 800 405 L950 322 Q1010 290 1003 260" stroke="#58baff" strokeWidth="40" />
        <path d="M24 195 C30 240 60 250 85 262 L540 410 C600 435 740 450 800 405 L950 322 Q1010 290 1003 260" stroke="#52aefc" strokeWidth="20" />
        <path d="M27 200 C27 180 45 165 75 148 L250 50 C290 25 370 20 425 38 L955 208" stroke="#62c6fc" strokeWidth="8" />
        <path d="M22 180 Q20 230 70 256" stroke="#3b86c8" strokeWidth="12" />
      </g>
    </g>
    <path d="M27 205 Q28 242 85 262 L540 410 C600 430 740 450 800 405 L950 322 Q1012 290 1003 262" fill="none" stroke="#28384a" strokeWidth="2" />

    <path d="M104 182 C104 165 120 155 140 145 L285 67 C315 50 350 46 395 54 L885 207 C922 220 932 238 920 252 C915 260 905 267 895 272 L775 345 C740 374 680 380 635 368 L125 207 C110 200 104 192 104 182Z" fill="url(#wall)" stroke="#1e2a36" strokeWidth="3" />
    <path d="M113 184 C112 170 126 160 145 150 L290 72 C320 55 350 52 390 60 L880 214 C912 224 920 240 912 252" fill="none" stroke="#1e2a36" strokeWidth="2" />
    <g clipPath="url(#panelClip)">
      <rect x="100" y="50" width="840" height="340" fill="#6fe2ff" />
      <g fill="url(#valley)">
        <path transform="translate(310 115)" d={valleyShape} />
        <path transform="translate(490 172)" d={valleyShape} />
        <path transform="translate(650 225)" d={valleyShape} />
      </g>
    </g>
    <g fill="#3474ad" stroke="#1e2a36" strokeWidth="2">
      <path d="M250 246 Q300 240 345 276Z" /><path d="M425 300 Q460 298 492 322Z" /><path d="M590 353 Q620 350 640 368Z" />
      <path d="M130 202 Q155 205 185 222Z" />
    </g>
    <g fill="none" stroke="#1e2a36" strokeWidth="2">
      <path d="M130 206 L640 367 Q690 378 740 360 L775 343 L900 266" strokeWidth="3" />
      <path d="M160 167 Q190 160 207 170 L320 110 L300 100 L268 102 M133 200 L207 168 M207 170 L212 158 L305 113 M320 110 L285 122 L268 102 M288 68 V90 M130 196 Q135 175 160 167 M300 100 L395 64" />
      <path d="M395 64 C420 82 440 100 470 104 C500 108 520 106 542 115 C580 127 600 155 640 160 C670 162 690 160 707 168 C745 182 755 215 800 218 C830 220 845 210 862 218 Q900 235 902 265" />
      <path d="M542 115 L500 138 M707 168 L655 195 M862 218 L820 240 M310 246 L360 218 M470 305 L520 273 M630 360 L692 325 M195 222 L235 195" />
      <path d="M690 330 L803 270 L855 300 L740 358 M705 332 L800 283 L840 303 M715 345 L805 297 L835 308 M803 270 L805 297 M690 330 Q705 352 740 358" strokeWidth="3" />
    </g>

    <path d="M335 210 L350 190 L395 170 L440 147 Q470 132 500 144 L675 198 Q705 212 695 240 L600 290 Q560 305 540 288 L520 265 L470 268 Q420 266 395 238 L345 216Z" fill="#6edcff" stroke="#1e2a36" strokeWidth="2" />
    <path d="M425 158 Q455 136 490 146 L670 200 Q690 212 678 230 L600 276 Q560 285 540 272 L590 255 L620 240 L440 190Z" fill="#3a86c0" stroke="#1e2a36" strokeWidth="3" />
    <path d="M478 162 L660 218 L620 240 L440 180Z" fill="#67d4ff" />
    <path d="M355 208 L388 180 L400 196 L440 190 L592 240 L585 278 L545 276 L500 262 L395 232Z" fill="#6ee0ff" />
    <path d="M388 175 L425 187 L442 196 L440 206 L412 210 L388 202Z" fill="#2f78b0" stroke="#1e2a36" strokeWidth="2" />
    <path d="M440 190 L592 236 L592 250 L440 204Z" fill="#3580b8" />
    <path d="M592 240 L622 248 L600 272 L588 278Z" fill="#2f78b0" />
    <path d="M395 164 L415 162 L640 234 L625 246 L590 240 L395 178Z" fill="#66cff8" stroke="#1e2a36" strokeWidth="3" />
    <path d="M398 170 L630 241 M480 166 L650 218 M490 178 L630 222" fill="none" stroke="#1e2a36" strokeWidth="2" />
    <path d="M395 232 Q435 236 470 252 L450 256 Q415 250 395 232Z" fill="#3578b2" stroke="#1e2a36" strokeWidth="2" />
    <path d="M355 208 L388 186 M375 212 L395 236 L520 268 M600 276 L680 232 M520 268 Q560 290 600 276" fill="none" stroke="#1e2a36" strokeWidth="3" />
  </Model>
);

const AxisTriad = () => (
  <Triad width="48" height="60" viewBox="0 0 48 60" role="img" aria-label="坐标系">
    <g fill="none" stroke="#a0a0a0"><path d="M12 24 L24 18 L38 22 L26 29Z M12 24 V40 L26 45 V29 M24 18 V34 L12 40 M24 34 L38 39" /></g>
    <path d="M36 38 L14 31" stroke="#dc9a9a" strokeWidth="2" />
    <path d="M37 39 L24 46" stroke="#208a2a" strokeWidth="2" /><path d="M19 50 L24 43 L27 48Z" fill="#208a2a" />
    <path d="M38 37 V18" stroke="#1238c8" strokeWidth="3" /><path d="M38 12 L35 20 H41Z" fill="#1238c8" />
    <circle cx="39" cy="39" r="4" fill="#e4e4e4" stroke="#aaa" />
    <text x="34" y="10" fill="#2040e0">Z</text><text x="6" y="34" fill="#d43030">X</text><text x="12" y="56" fill="#208a2a">Y</text>
  </Triad>
);

/* ---------- page ---------- */

export default function App() {
  return (
    <Window>
      <GlobalStyle />
      <TopBar>
        <Group $gap={-4}>
          <TopIcon n="layers" label="图层设置" /><TopIcon n="layerList" label="图层列表" /><Divider />
          <TopIcon n="tag" label="标签" /><Divider />
          <TopIcon n="blueBlock" label="检查块" /><TopIcon n="sketchCheck" label="检查草图" /><TopIcon n="solidCheck" label="检查实体" /><Divider />
          <TopIcon n="abc" label="注释" /><Drop />
        </Group>
        <Group>
          <Grip /><TopIcon n="bridge" label="桥接" /><TopIcon n="saddle" label="曲面" /><TopIcon n="pick" label="选取" /><Drop />
        </Group>
        <Group>
          <Grip /><TopIcon n="coil" label="圆柱弹簧" /><TopIcon n="spring" label="拉伸弹簧" /><TopIcon n="roll" label="碟簧" /><Divider />
          <TopIcon n="springX" label="删除弹簧" /><Drop />
        </Group>
        <Group $gap={53}>
          <Grip /><TopIcon n="triangle" label="三角形" /><TopIcon n="gridTri" label="网格" /><TopIcon n="pts" label="点集" />
          <TopIcon n="holes" label="孔表" /><TopIcon n="note" label="注释表" /><TopIcon n="brush" label="尺寸样式" /><Divider />
          <TopIcon n="h7" label="公差" /><Drop />
        </Group>
        <Group>
          <Grip /><TopIcon n="lockCubes" label="锁定部件" /><TopIcon n="lockCubes" label="锁定装配" /><Drop />
        </Group>
        <Group $grow>
          <Grip /><TopIcon n="line" label="直线" /><TopIcon n="arc" label="圆弧" /><TopIcon n="spline" label="样条" /><TopIcon n="offset" label="偏置曲线" />
          <TopIcon n="surfCurve" label="面上曲线" /><TopIcon n="project" label="组合投影" /><TopIcon n="surfPin" label="投影曲线" /><TopIcon n="surfCross" label="相交曲线" /><Drop />
        </Group>
      </TopBar>

      <SelectionBar>
        <Picker $w={128} $shift={-35}>
          <Select aria-label="选择过滤器"><option>无选择过滤器</option></Select><BigArrow />
        </Picker>
        <Picker $w={140}>
          <Select aria-label="选择范围"><option>整个装配</option></Select><BigArrow />
        </Picker>
        <Spacer $w={4} />
        <SmallIcon n="assembly" label="装配" /><Divider $tall />
        <SmallIcon n="undoFilter" label="重置过滤器" />
        <FilterActive type="button" aria-label="过滤器">
          <svg width="15" height="15" viewBox="0 0 54 54" aria-hidden="true">{smallIcons.activeFilter}</svg>
        </FilterActive>
        <Spacer $w={2} /><Drop top={14} />
        <SmallIcon n="rotateCross" label="旋转点" /><SmallIcon n="treeGray" label="结构" /><Divider $tall />
        <SmallIcon n="marquee" label="框选" /><Drop top={14} /><Divider $tall />
        <SmallIcon n="gauge" label="面分析" /><SmallIcon n="cube3" label="着色" /><Divider $tall />
        <SmallIcon n="snapAll" label="启用捕捉点" /><SmallIcon n="l1" label="端点" /><SmallIcon n="l2" label="中点" />
        <SmallIcon n="sCurve" label="控制点" /><SmallIcon n="poly" label="极点" /><SmallIcon n="cross2" label="交点" />
        <SmallIcon n="circDot" label="圆弧中心" /><SmallIcon n="circ4" label="象限点" /><SmallIcon n="plus" label="现有点" />
        <SmallIcon n="l3" label="曲线上的点" /><SmallIcon n="face" label="面上的点" /><Spacer $w={2} /><Divider $tall />
        <SmallIcon n="grid" label="栅格" />
      </SelectionBar>

      <Main>
        <Sidebar>
          <PanelTitle>部件导航器<MaxButton type="button" aria-label="最大化" /></PanelTitle>
          <TreePanel>
            <TreeHeader>
              <SortButton type="button">名称
                <svg width="10" height="6" viewBox="0 0 10 6" aria-hidden="true"><path d="M0 6 L5 0 L10 6Z" fill="#111" /></svg>
              </SortButton>
              <HeaderCorner />
            </TreeHeader>
            <TreeBody>
              <Tree>
                <Row><Stem /><Gutter $w={9} /><TreeIcon n="clock" /><RowLabel>历史记录模式</RowLabel></Row>
                <Row><Toggle label="展开模型视图" /><Gutter $w={4} /><TreeIcon n="view" /><RowLabel>模型视图</RowLabel></Row>
                <Row><Toggle label="展开摄像机" /><Gutter $w={4} />
                  <svg width="16" height="16" viewBox="0 0 48 48" aria-hidden="true"><Fill d="M6 27 L14 20 L20 29 Q28 12 42 5 Q31 25 24 43 L18 43Z" f="#10b030" /></svg>
                  <TreeIcon n="camera" /><RowLabel>摄像机</RowLabel>
                </Row>
                <Row><Toggle open label="折叠模型历史记录" /><Gutter $w={4} /><TreeIcon n="folder" /><RowLabel>模型历史记录</RowLabel></Row>
                {features.map(f => (
                  <Row key={f.text} $dim={f.dim}>
                    <Gutter $w={10} $child />
                    <Check type="checkbox" defaultChecked aria-label={f.text} />
                    <TreeIcon n={f.icon} />
                    <FeatureLabel>{f.text}</FeatureLabel>
                  </Row>
                ))}
              </Tree>
              <VScroll>
                <ScrollButton type="button" aria-label="向上滚动" $wide><Chevron d="M1 6 L4 3 L7 6" /></ScrollButton>
                <VThumb />
                <ScrollButton type="button" aria-label="向下滚动" $wide><Chevron d="M1 2 L4 5 L7 2" /></ScrollButton>
              </VScroll>
            </TreeBody>
            <HScroll>
              <ScrollButton type="button" aria-label="向左滚动"><Chevron d="M5 1 L2 4 L5 7" /></ScrollButton>
              <HThumb />
              <ScrollButton type="button" aria-label="向右滚动" $wide><Chevron d="M3 1 L6 4 L3 7" /></ScrollButton>
            </HScroll>
          </TreePanel>
          <PanelFoot />
        </Sidebar>
        <Viewport aria-label="图形窗口">
          <StorageBox />
          <AxisTriad />
        </Viewport>
      </Main>

      <SketchBar>
        <Grip $tall />
        <SketchIcon n="newSketch" label="草图" />
        <Flagged type="button" aria-label="完成">
          <svg width="22" height="22" viewBox="0 0 78 72" aria-hidden="true">{sketchIcons.flag}</svg>
        </Flagged>
        <FinishText type="button">完成草图</FinishText>
        <SketchIcon n="profile" label="轮廓" /><SketchIcon n="line" label="直线" /><SketchIcon n="arc" label="圆弧" /><SketchIcon n="circle" label="圆" />
        <SketchIcon n="fillet" label="圆角" /><SketchIcon n="chamfer" label="倒斜角" /><SketchIcon n="rect" label="矩形" /><SketchIcon n="spline" label="艺术样条" />
        <SketchIcon n="plus" label="点" /><SketchIcon n="offset" label="偏置曲线" /><Spacer $w={1} /><Drop top={0} /><Divider $tall />
        <SketchIcon n="trim" label="快速修剪" /><SketchIcon n="extend" label="快速延伸" /><SketchIcon n="corner" label="制作拐角" /><Divider $tall />
        <SketchIcon n="dimension" label="快速尺寸" /><Drop top={0} /><Divider $tall />
        <SketchIcon n="parallel" label="几何约束" /><SketchIcon n="mirror" label="设为对称" /><SketchIcon n="autoCon" label="显示约束" /><Drop top={0} /><Divider $tall />
        <SketchIcon n="attach" label="重新附着" /><SketchIcon n="edit" label="编辑定义" /><SketchIcon n="sphere" label="更新模型" /><Drop top={12} />
      </SketchBar>

      <BottomBar>
        <FootIcon n="cage" label="包容体" /><FootIcon n="win" label="窗口" /><FootIcon n="addBody" label="添加" /><Spacer $w={13} />
        <FootIcon n="moveBody" label="移动" /><FootIcon n="mirrorBody" label="镜像" /><FootIcon n="axis" label="轴" /><Divider />
        <FootIcon n="boxes" label="阵列" /><FootIcon n="block" label="块" /><Spacer $w={5} /><FootIcon n="steps" label="台阶" /><Divider />
        <FootIcon n="slab" label="板" /><Divider />
        <FootIcon n="ring" label="环" /><FootIcon n="plate" label="板件" /><FootIcon n="link" label="链接" /><Divider />
        <FootIcon n="prism" label="棱柱" />
      </BottomBar>
    </Window>
  );
}
